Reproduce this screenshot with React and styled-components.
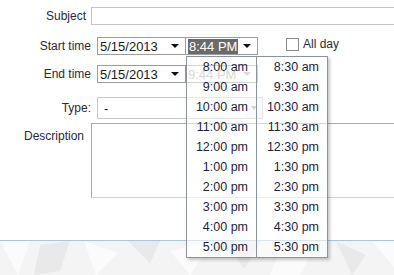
import React from "react";
import styled, { createGlobalStyle } from "styled-components";

const Global = createGlobalStyle`
  html, body {
    margin: 0;
    padding: 0;
    background: #ffffff;
    overflow: hidden;
  }
  body {
    font-family: "Liberation Sans", Arial, sans-serif;
    color: #2c2838;
  }
`;

const Page = styled.div`
  width: 394px;
  height: 275px;
  overflow: hidden;
  display: flex;
  flex-direction: column;
`;

const Form = styled.div`
  height: 240px;
  border-bottom: 1px solid #a6c6e2;
  background: #ffffff;
  display: flex;
  flex-direction: column;
`;

const Row = styled.div`
  display: flex;
  align-items: ${(p) => (p.$top ? "flex-start" : "center")};
  margin-top: ${(p) => p.$mt}px;
  height: ${(p) => p.$h}px;
`;

const Label = styled.div`
  width: ${(p) => p.$w}px;
  margin-right: ${(p) => p.$gap}px;
  text-align: right;
  font-size: 12px;
  color: #2c2838;
  flex-shrink: 0;
  padding-top: ${(p) => p.$pt || 0}px;
`;

const TextInput = styled.div`
  box-sizing: border-box;
  width: 320px;
  height: 18px;
  border: 1px solid #c4c4c4;
  flex-shrink: 0;
`;

const DateBox = styled.div`
  box-sizing: border-box;
  position: relative;
  width: ${(p) => p.$w}px;
  height: 18px;
  border: 1px solid #9c9c9c;
  background: #fff;
  display: flex;
  align-items: center;
  padding: 0 6px 0 2px;
  font-size: 13px;
  color: ${(p) => (p.$disabled ? "#a8a8a8" : "#1a1a1a")};
  flex-shrink: 0;
  & + & {
    margin-left: -1px;
  }
`;

const Value = styled.span`
  flex: 1;
  line-height: 15px;
  white-space: nowrap;
`;

const Selected = styled.span`
  background: #6a6a6a;
  color: #ffffff;
  padding: 0 1px;
  line-height: 15px;
  white-space: nowrap;
`;

const Spacer = styled.span`
  flex: 1;
`;

const Caret = styled.span`
  width: 0;
  height: 0;
  border-left: 4px solid transparent;
  border-right: 4px solid transparent;
  border-top: 4px solid ${(p) => p.$color || "#111"};
`;

const CheckWrap = styled.label`
  display: flex;
  align-items: center;
  margin-left: 28px;
  font-size: 12px;
  color: #2c2838;
  margin-top: -4px;
`;

const Check = styled.span`
  box-sizing: border-box;
  width: 13px;
  height: 13px;
  border: 1px solid #8a8a8a;
  margin-right: 4px;
  background: #fff;
`;

const Select = styled.div`
  box-sizing: border-box;
  width: 166px;
  height: 22px;
  border: 1px solid #c6c6c6;
  display: flex;
  align-items: stretch;
  font-size: 13px;
  color: #1a1a1a;
`;

const SelectText = styled.span`
  flex: 1;
  padding-left: 6px;
  display: flex;
  align-items: center;
`;

const SelectButton = styled.span`
  width: 17px;
  background: #f3f3f3;
  display: flex;
  align-items: center;
  justify-content: center;
  & > span {
    border-left-width: 3px;
    border-right-width: 3px;
  }
`;

const TextArea = styled.div`
  box-sizing: border-box;
  width: 320px;
  height: 75px;
  border: 1px solid #a8a8a8;
  border-bottom-color: #d4d4d4;
  flex-shrink: 0;
`;

const Dropdown = styled.div`
  position: absolute;
  left: 0;
  top: 18px;
  z-index: 10;
  box-sizing: border-box;
  width: 142px;
  border: 1px solid #8d939e;
  background: rgba(255, 255, 255, 0.55);
  box-shadow: 2px 2px 3px rgba(0, 0, 0, 0.22);
  display: grid;
  grid-template-columns: 70px 70px;
`;

const Column = styled.div`
  display: flex;
  flex-direction: column;
  border-right: ${(p) => (p.$divider ? "1px solid #8d939e" : "none")};
`;

const Item = styled.div`
  height: 20px;
  line-height: 20px;
  text-align: right;
  padding-right: 8px;
  font-size: 12.5px;
  color: #231d3c;
  white-space: nowrap;
`;

const Ground = styled.svg`
  display: block;
  flex: 1;
  width: 394px;
`;

const hours = ["8", "9", "10", "11", "12", "1", "2", "3", "4", "5"];
const suffix = (h) => (["8", "9", "10", "11"].includes(h) ? "am" : "pm");

function TimeDropdown() {
  return (
    <Dropdown>
      <Column $divider>
        {hours.map((h) => (
          <Item key={h}>{`${h}:00 ${suffix(h)}`}</Item>
        ))}
      </Column>
      <Column>
        {hours.map((h) => (
          <Item key={h}>{`${h}:30 ${suffix(h)}`}</Item>
        ))}
      </Column>
    </Dropdown>
  );
}

const shards = [
  "0,0 30,0 18,34",
  "40,4 70,0 60,30 34,34",
  "84,0 118,12 96,34",
  "128,0 160,0 150,22",
  "170,10 214,0 190,34",
  "226,0 262,0 244,28",
  "282,6 318,0 300,34 270,34",
  "336,0 366,14 352,34",
  "372,0 394,0 394,26",
];

export default function App() {
  return (
    <>
      <Global />
      <Page>
        <Form>
          <Row $mt={7} $h={18}>
            <Label $w={86} $gap={5}>Subject</Label>
            <TextInput />
          </Row>
          <Row $mt={12} $h={18}>
            <Label $w={91} $gap={6}>Start time</Label>
            <DateBox $w={89}>
              <Value>5/15/2013</Value>
              <Caret />
            </DateBox>
            <DateBox $w={73}>
              <Selected>8:44 PM</Selected>
              <Spacer />
              <Caret />
              <TimeDropdown />
            </DateBox>
            <CheckWrap>
              <Check />
              All day
            </CheckWrap>
          </Row>
          <Row $mt={10} $h={18}>
            <Label $w={91} $gap={6}>End time</Label>
            <DateBox $w={89}>
              <Value>5/15/2013</Value>
              <Caret />
            </DateBox>
            <DateBox $w={73} $disabled>
              <Value>9:44 PM</Value>
              <Caret $color="#b0b0b0" />
            </DateBox>
          </Row>
          <Row $mt={14} $h={22}>
            <Label $w={91} $gap={6}>Type:</Label>
            <Select>
              <SelectText>-</SelectText>
              <SelectButton>
                <Caret $color="#a0a0a0" />
              </SelectButton>
            </Select>
          </Row>
          <Row $mt={4} $h={75} $top>
            <Label $w={84} $gap={7} $pt={6}>Description</Label>
            <TextArea />
          </Row>
        </Form>
        <Ground viewBox="0 0 394 34" preserveAspectRatio="none">
          <rect width="394" height="34" fill="#f4f4f4" />
          {shards.map((pts, i) => (
            <polygon key={i} points={pts} fill={i % 2 ? "#e9e9e9" : "#fbfbfb"} />
          ))}
        </Ground>
      </Page>
    </>
  );
}
